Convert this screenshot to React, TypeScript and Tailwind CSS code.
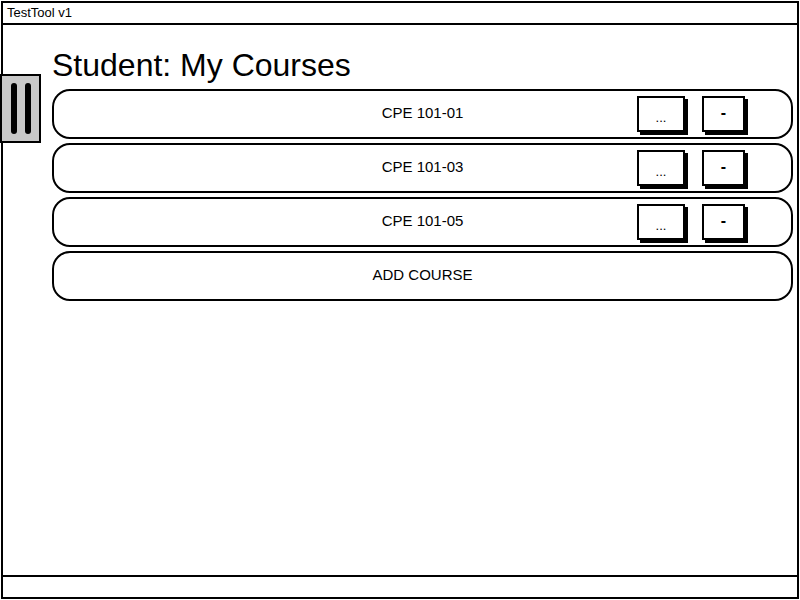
import React from "react";

const font = { fontFamily: '"Liberation Sans", Arial, sans-serif' };

function Row({ label, buttons }: { label: string; buttons?: boolean }) {
  return (
    <div className="grid h-[50px] grid-cols-[1fr_auto_1fr] items-center rounded-[18px] border-2 border-black bg-white">
      <div />
      <div className="pb-[1px] text-[15px] text-black">{label}</div>
      <div className="flex items-center justify-end gap-[17px] pr-[46px]">
        {buttons && (
          <>
            <div className="flex h-[36px] w-[48px] items-end justify-center border-2 border-black bg-white pb-[6px] text-[13px] leading-none text-black shadow-[3px_3px_0_#000]">
              ...
            </div>
            <div className="flex h-[36px] w-[43px] items-center justify-center border-2 border-black bg-white pb-[3px] text-[16px] font-bold leading-none text-black shadow-[3px_3px_0_#000]">
              -
            </div>
          </>
        )}
      </div>
    </div>
  );
}

export default function App() {
  return (
    <div className="h-[600px] w-[800px] bg-white pl-[1px] pt-[1px]" style={font}>
      <div className="relative flex h-[598px] w-[798px] flex-col border-2 border-black">
        <div className="flex h-[22px] shrink-0 items-center border-b-2 border-black pl-[4px] text-[13px] text-black">
          TestTool v1
        </div>
        <div className="flex flex-1 flex-col pl-[49px] pr-[4px] pt-[24px]">
          <div className="h-[32px] text-[32px] leading-[32px] text-black">Student: My Courses</div>
          <div className="mt-[8px] flex flex-col gap-[4px]">
            <Row label="CPE 101-01" buttons />
            <Row label="CPE 101-03" buttons />
            <Row label="CPE 101-05" buttons />
            <Row label="ADD COURSE" />
          </div>
        </div>
        <div className="h-[22px] shrink-0 border-t-2 border-black" />
        <div className="absolute left-[-3px] top-[71px] flex h-[69px] w-[41px] items-center justify-center gap-[8px] border-2 border-black bg-[#c8c8c8]">
          <div className="h-[51px] w-[6px] rounded-full bg-black" />
          <div className="h-[51px] w-[6px] rounded-full bg-black" />
        </div>
      </div>
    </div>
  );
}
